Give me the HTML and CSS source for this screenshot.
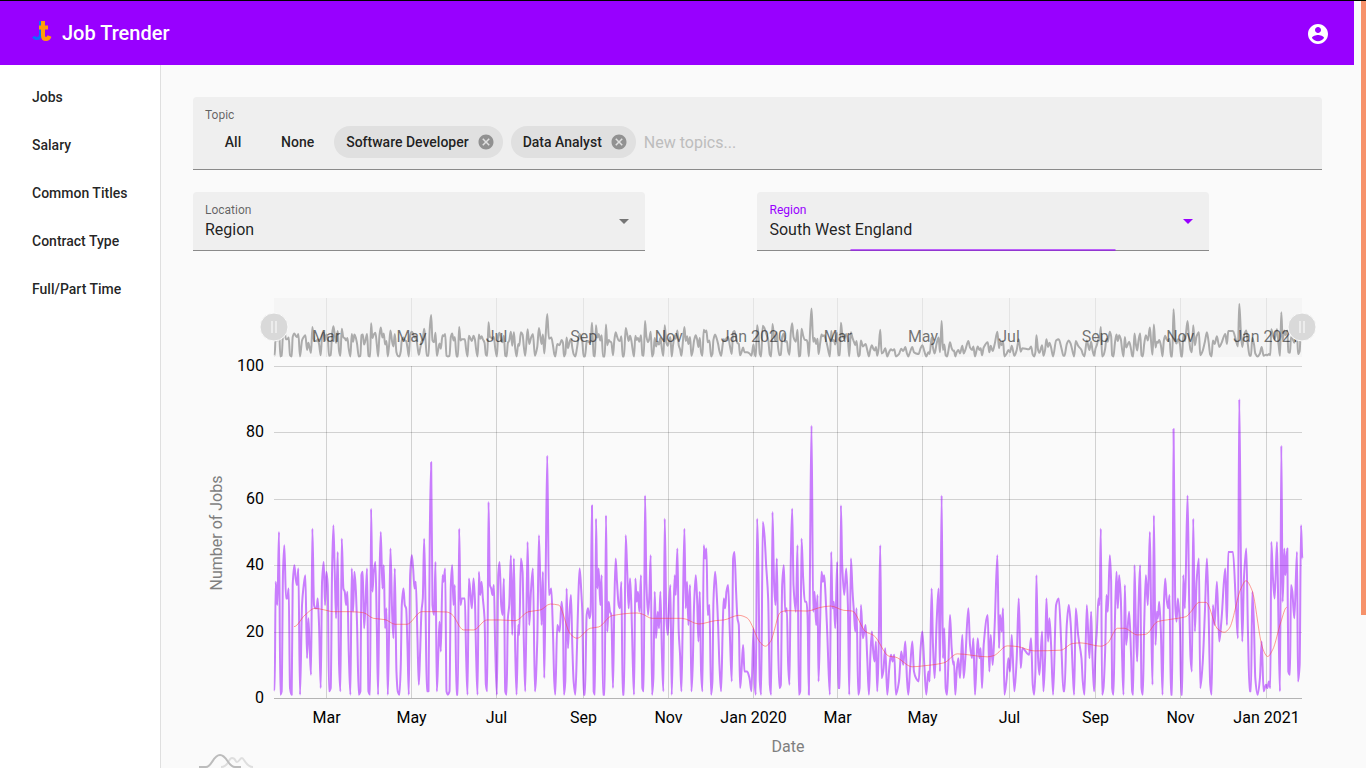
FILE: index.html
```html
<!DOCTYPE html>
<html lang="en">
<head>
  <meta charset="UTF-8">
  <meta name="viewport" content="width=device-width, initial-scale=1.0">
  <title>Job Trender</title>
  <link rel="stylesheet" href="styles.css">
</head>
<body>
  <div class="page">
    <header class="toolbar">
      <a class="brand" href="#">
        <svg class="logo" viewBox="0 0 20 24" aria-hidden="true">
          <path d="M8.500 0v13q0 4.500-3.500 4.500-2.500 0-3.500-2" fill="none" stroke="#0a6cff" stroke-width="3"/>
          <path d="M11 0v14.500q0 3.500 3 3.500 2.500 0 3.500-3M7 6.500h9" fill="none" stroke="#ff9c0a" stroke-width="4"/>
        </svg>
        <span>Job Trender</span>
      </a>
      <button class="account" aria-label="Account">
        <svg viewBox="0 0 24 24"><path fill="currentColor" d="M12 2C6.480 2 2 6.480 2 12s4.480 10 10 10 10-4.480 10-10S17.520 2 12 2zm0 3c1.660 0 3 1.340 3 3s-1.340 3-3 3-3-1.340-3-3 1.340-3 3-3zm0 14.200c-2.500 0-4.710-1.280-6-3.220.030-1.990 4-3.080 6-3.080 1.990 0 5.970 1.090 6 3.080-1.290 1.940-3.500 3.220-6 3.220z"/></svg>
      </button>
    </header>

    <div class="layout">
      <nav class="sidenav">
        <a href="#jobs">Jobs</a>
        <a href="#salary">Salary</a>
        <a href="#titles">Common Titles</a>
        <a href="#contract">Contract Type</a>
        <a href="#time">Full/Part Time</a>
      </nav>

      <main class="content">
        <div class="field topics">
          <label for="topic">Topic</label>
          <div class="chips">
            <button class="text-button">All</button>
            <button class="text-button">None</button>
            <span class="chip">Software Developer
              <button class="remove" aria-label="Remove Software Developer"><svg viewBox="0 0 24 24"><path fill="currentColor" d="M12 2C6.470 2 2 6.470 2 12s4.470 10 10 10 10-4.470 10-10S17.530 2 12 2zm5 13.590L15.590 17 12 13.410 8.410 17 7 15.590 10.590 12 7 8.410 8.410 7 12 10.590 15.590 7 17 8.410 13.410 12 17 15.590z"/></svg></button>
            </span>
            <span class="chip">Data Analyst
              <button class="remove" aria-label="Remove Data Analyst"><svg viewBox="0 0 24 24"><path fill="currentColor" d="M12 2C6.470 2 2 6.470 2 12s4.470 10 10 10 10-4.470 10-10S17.530 2 12 2zm5 13.590L15.590 17 12 13.410 8.410 17 7 15.590 10.590 12 7 8.410 8.410 7 12 10.590 15.590 7 17 8.410 13.410 12 17 15.590z"/></svg></button>
            </span>
            <input id="topic" type="text" placeholder="New topics...">
          </div>
        </div>

        <div class="filters">
          <div class="field">
            <label for="location">Location</label>
            <select id="location">
              <option>Region</option>
            </select>
          </div>
          <div class="field active">
            <label for="region">Region</label>
            <select id="region">
              <option>South West England</option>
            </select>
          </div>
        </div>

        <svg class="chart" id="chart" role="img" aria-label="Number of jobs by date"></svg>
      </main>
    </div>
  </div>
  <div class="scroll-thumb"></div>

  <script src="chart.js"></script>
</body>
</html>
```
FILE: styles.css
```css
* {
  box-sizing: border-box;
}
body {
  margin: 0;
  height: 100vh;
  overflow: hidden;
  background: #fafafa;
  color: rgba(0, 0, 0, 0.87);
  font-family: Roboto, "Liberation Sans", sans-serif;
  font-size: 14px;
  border-top: 1px solid #000;
}
button {
  border: none;
  background: none;
  padding: 0;
  color: inherit;
  font: inherit;
  cursor: pointer;
}
a {
  color: inherit;
  text-decoration: none;
}
.page {
  display: flex;
  flex-direction: column;
  height: 100%;
  margin-right: 12px;
}

/* Toolbar */
.toolbar {
  display: flex;
  flex: none;
  align-items: center;
  justify-content: space-between;
  height: 64px;
  padding: 0 24px 0 32px;
  background: #9800ff;
  color: #fff;
}
.brand {
  display: flex;
  align-items: center;
  gap: 10px;
  font-size: 20px;
  font-weight: 500;
}
.logo {
  width: 20px;
  height: 24px;
}
.account {
  padding-top: 2px;
}
.account svg {
  display: block;
  width: 24px;
  height: 24px;
}

.layout {
  display: flex;
  flex: 1;
  min-height: 0;
}
.sidenav {
  flex: none;
  width: 161px;
  padding-top: 8px;
  background: #fff;
  border-right: 1px solid #dfdfdf;
}
.sidenav a {
  display: block;
  padding: 0 32px;
  line-height: 48px;
  font-weight: 500;
}
.content {
  flex: 1;
  min-width: 0;
  padding: 32px;
  overflow: hidden;
}

/* Form fields */
.field {
  position: relative;
  padding: 10px 12px 0;
  background: #efefef;
  border-bottom: 1px solid #8a8a8a;
  border-radius: 4px 4px 0 0;
}
.field label {
  display: block;
  color: rgba(0, 0, 0, 0.6);
  font-size: 12px;
  line-height: 16px;
}
.topics {
  height: 73px;
}
.chips {
  display: flex;
  align-items: center;
  gap: 8px;
  margin: 3px 0 0 -4px;
}
.text-button {
  min-width: 64px;
  margin-right: -8px;
  padding: 0 16px;
  line-height: 32px;
  font-weight: 500;
}
.text-button + .chip {
  margin-left: 4px;
}
.chip {
  display: flex;
  align-items: center;
  gap: 8px;
  height: 32px;
  padding: 0 8px 0 12px;
  border-radius: 16px;
  background: #e0e0e0;
  font-weight: 500;
  white-space: nowrap;
}
.remove {
  opacity: 0.4;
}
.remove svg {
  display: block;
  width: 18px;
  height: 18px;
}
.chips input {
  flex: 1;
  min-width: 100px;
  padding: 0;
  border: none;
  outline: none;
  background: none;
  font: 16px Roboto, sans-serif;
}
.chips input::placeholder {
  color: #bdbdbd;
}
.filters {
  display: grid;
  grid-template-columns: 40% 40%;
  column-gap: 10%;
  margin-top: 22px;
}
.filters .field {
  height: 59px;
}
.field select {
  appearance: none;
  display: block;
  width: 100%;
  height: 22px;
  padding: 0;
  border: none;
  outline: none;
  background: none;
  color: inherit;
  font: 16px Roboto, sans-serif;
}
.filters .field::before {
  content: "";
  position: absolute;
  top: 27px;
  right: 16px;
  border: 5px solid transparent;
  border-top-color: #757575;
  border-bottom: none;
}
.filters .active::before {
  border-top-color: #9800ff;
}
.filters .active label {
  color: #9800ff;
}
.active::after {
  content: "";
  position: absolute;
  left: 50%;
  bottom: -1px;
  width: 265px;
  height: 2px;
  background: #9800ff;
  opacity: 0.6;
  transform: translateX(-50%);
}

/* Chart */
.chart {
  display: block;
  width: 100%;
  height: 500px;
  margin-top: 30px;
  font-size: 16px;
}
.chart .axis-title {
  fill: #7f7f7f;
}
.chart .grid {
  stroke: #000;
  stroke-opacity: 0.16;
}
.chart .preview-grid {
  stroke: #e4e4e4;
}
.chart .base {
  stroke: #b4b4b4;
}
.chart .jobs {
  fill: none;
  stroke: #9800ff;
  stroke-opacity: 0.5;
  stroke-width: 2;
  stroke-linejoin: round;
}
.chart .trend {
  fill: none;
  stroke: #ff3b30;
  stroke-opacity: 0.5;
}
.chart .preview {
  fill: none;
  stroke: #ababab;
  stroke-width: 2;
  stroke-linejoin: round;
}
.chart .preview-label {
  fill: #000;
  fill-opacity: 0.55;
}

.scroll-thumb {
  position: fixed;
  top: 1px;
  right: 0;
  width: 5px;
  height: 80%;
  background: #f6926a;
}
```
FILE: chart.js
```js
// Each block lists x, jobs, x, jobs ... with x counted from the block's start
const jobs = [
  { start: -252, data: [
    254,2,257,35,262,28,267,50,271,1,275,2,279,38,283,46,288,30,292,30,296,33,300,3,305,1,308,34,313,40,317,36,321,34,325,39,330,1,
    336,28,340,33,346,37,351,12,355,24,359,15,363,7,367,51,372,28,376,27,380,27,383,30,387,22,392,3,396,35,401,41,405,28,409,38,413,34,417,2,422,3,
    426,38,430,52,434,38,438,24,443,44,447,10,451,2,455,48,460,33,464,32,468,28,472,32,476,14,481,1,485,39,489,26,493,38,497,33,501,22,506,1,511,2,
    514,37,518,38,522,21,526,28,531,39,535,2,540,1,543,57,547,32,551,38,556,41,560,22,564,1,568,36,572,50,577,33,581,40,585,21,589,27,593,1,
    597,20,601,45,606,26,610,18,614,39,619,8,623,2,628,1,632,10,635,28,640,33,644,28,648,27,652,16,656,1,660,37,665,43,669,39,673,33,677,35,682,18,686,4,
    690,14,694,26,698,30,702,48,706,29,710,2,715,2,719,50,723,71,727,28,732,25,736,41,740,2,744,12,748,23,752,14,757,37,760,35,765,39,769,2,773,1,778,2,
    782,34,786,40,790,28,794,34,799,1,803,1,807,51,811,28,815,30,820,30,824,30,828,12,832,1,836,36,841,31,845,27,850,36,854,30,858,12,862,1,
    866,38,870,31,874,35,878,30,883,24,887,4,891,2,895,59,899,34,903,33,907,31,911,34,915,15,920,1,924,37,928,41,933,28,937,25,941,36,945,2,949,1,
    953,24,957,28,962,43,966,19,971,42,975,14,979,1,984,22,987,19,992,42,997,38,1001,16,1005,2,1012,47,1017,22,1022,32,1028,39,1034,2,1041,17,1046,49
  ] },
  { start: 768, data: [
    34,22,38,38,42,6,46,35,51,73,56,31,63,33,68,20,72,5,75,1,81,22,88,20,94,29,98,24,101,1,105,5,109,33,113,15,118,26,122,31,126,16,130,5,135,1,
    140,15,144,30,148,39,153,32,156,26,160,1,164,1,169,25,173,27,178,24,181,26,185,58,190,2,194,1,197,54,201,33,205,39,210,28,214,37,218,1,223,1,
    227,55,231,20,235,29,239,26,243,25,248,3,252,28,256,42,260,35,265,28,269,27,273,35,277,1,281,1,286,49,290,40,295,27,299,36,303,28,307,12,311,1,
    315,36,319,29,323,32,327,26,332,37,336,3,340,2,344,61,348,35,353,25,357,31,361,43,365,1,369,6,373,32,377,18,382,26,386,21,390,32,395,12,399,2,
    403,54,408,24,412,19,416,28,420,34,424,1,428,20,433,37,436,31,441,45,445,20,449,13,453,2,457,23,462,51,466,27,470,35,474,22,479,34,483,2,487,10,
    491,28,496,37,500,30,504,17,508,32,512,8,516,2,520,46,524,42,528,45,532,25,537,28,542,1,546,5,549,29,554,38,559,31,563,22,567,10,572,2,
    577,22,580,30,584,27,588,32,593,34,598,20,604,5,608,42,612,44,617,32,621,24,625,22,629,3,633,8,638,16,642,8,650,8,657,6,663,2,669,21,673,4,676,1,
    680,54,684,38,688,5,692,1,697,53,702,49,707,40,713,30,718,4,722,1,726,56,731,34,735,28,739,42,743,15,747,3,751,4,755,34,760,40,764,26,769,27,773,10,777,4,
    781,42,785,57,789,34,796,26,801,46,805,1,809,2,813,48
  ] },
  { start: 1578, data: [
    8,36,13,29,18,29,21,25,25,1,29,48,33,82,38,26,42,32,47,22,51,31,54,5,59,24,63,38,67,35,71,37,75,31,80,20,88,1,92,44,96,27,100,29,104,21,110,41,113,3,118,3,
    121,58,125,40,131,31,137,39,142,28,146,1,151,42,156,32,160,26,164,20,168,27,173,1,177,3,181,28,187,18,195,22,200,12,205,1,209,12,214,20,218,14,222,11,226,17,230,2,
    234,14,239,46,243,6,248,8,254,15,260,1,266,9,271,13,276,11,281,13,286,1,295,5,302,14,308,10,314,17,319,6,323,1,328,8,335,17,340,8,346,6,354,5,360,15,365,20,371,10,377,1,
    383,8,387,5,393,33,397,16,402,6,408,23,414,33,418,8,423,61,427,12,431,21,435,3,439,1,443,10,448,25,453,15,458,10,460,11,464,1,468,8,473,12,478,6,485,19,489,6,494,12,503,27,
    508,16,514,12,518,18,523,1,531,18,536,12,540,15,544,3,549,16,561,25,566,8,570,19,576,10,582,22,590,43,595,15,598,25,603,20,607,27,611,1,618,6,623,12,628,8,633,19,641,2,
    648,12,654,30,660,9,665,15,685,13,691,18,696,4,700,1,704,8,707,37,712,12,716,7,724,20,728,2,733,12,737,30,742,17,746,24,751,16,757,1,766,28,774,30,782,15,788,2,791,2,
    798,22,804,28,810,22,816,8,820,1
  ] },
  { start: 2388, data: [
    15,27,22,19,32,12,36,5,41,1,48,28,56,12,61,26,65,12,70,2,74,14,78,20,83,30,86,28,90,51,94,1,98,3,103,14,107,31,111,26,117,43,121,35,124,3,128,1,132,22,137,38,141,27,145,37,
    150,30,154,12,158,1,162,34,166,16,175,26,181,12,184,2,187,1,191,40,195,22,199,11,203,28,208,40,212,3,216,1,220,22,225,37,231,28,237,50,241,24,245,4,249,55,254,16,258,26,261,24,
    265,29,270,20,275,1,279,28,283,36,287,30,292,27,296,31,300,1,304,1,308,81,313,28,317,23,321,30,327,22,331,1,334,1,337,37,342,27,350,61,355,28,359,12,363,8,367,54,372,20,377,35,
    384,42,388,3,395,10,402,26,408,42,413,26,418,4,422,1,426,28,431,22,438,35,445,17,452,24,463,39,468,22,472,44,486,44,495,28,501,18,505,90,510,40,514,17,519,36,526,45,531,20,
    536,2,540,2,544,32,549,22,553,6,560,1,567,6,572,17,578,2,585,4,589,3,594,5,598,3,601,47,606,36,611,30,618,47,623,20,627,2,631,76,635,29,640,45,643,37,649,45,652,8,657,7,
    660,34,664,32,670,24,678,44,681,5,686,10,690,52,694,42
  ] }
];

const trend = [
  { start: -252, data: [312,21.5,345,25,375,27,400,26.6,430,26,480,26,520,25.7,550,24,585,23.6,615,22.2,650,22.2,695,26,740,26,770,25.9,785,25.2,820,20.5,850,20.5,890,23.5,930,23.5,975,23.3,1015,26] },
  { start: 768, data: [30,26.5,60,28.3,85,28,120,19.3,140,18,180,21,205,21.4,245,24.8,320,25.6,335,25.3,365,24,410,24,455,24,505,22.3,555,23.3,580,23.5,625,24.9,650,24.1,690,16.6,705,15.6,720,17,750,25.8,770,26.3] },
  { start: 1578, data: [20,26.2,60,27.3,90,27.7,130,26.4,155,26.2,195,20,220,18.8,265,12.6,285,12.3,335,9.4,370,9.7,430,10.6,470,13.3,560,12.4,580,12.8,620,15.7,650,15.5,700,14.2,780,14.4,815,16.4] },
  { start: 2388, data: [30,16.6,90,15.6,110,16.5,140,21,160,21,200,19,225,19.2,260,23,300,23.7,345,24.5,360,26,385,28.8,405,28.8,440,20.8,460,19.8,475,21,510,33,525,35.3,543,32.5,575,15,590,12.5,605,14.5,630,23,647,27.3] }
];

const months = [
  ['Mar', 157], ['May', 412], ['Jul', 667], ['Sep', 928], ['Nov', 1183], ['Jan 2020', 1438],
  ['Mar', 1690], ['May', 1945], ['Jul', 2203], ['Sep', 2461], ['Nov', 2716], ['Jan 2021', 2974]
];

const svg = document.getElementById('chart');
const left = 81;
const total = 3081;
const plotTop = 85;
const plotHeight = 332;
const previewTop = 17;
const previewHeight = 59;

function flatten(blocks) {
  const points = [];
  blocks.forEach(block => {
    for (let i = 0; i < block.data.length; i += 2) {
      points.push([block.start + block.data[i], block.data[i + 1]]);
    }
  });
  return points;
}

// Smooth line that stays flat at each peak and dip, so it never overshoots
function curve(points) {
  const slopes = points.map((p, i) => {
    const a = points[i - 1];
    const c = points[i + 1];
    if (!a || !c) return 0;
    const before = (p[1] - a[1]) / (p[0] - a[0]);
    const after = (c[1] - p[1]) / (c[0] - p[0]);
    return before * after <= 0 ? 0 : 2 * before * after / (before + after);
  });
  let d = 'M' + points[0].join(' ');
  for (let i = 1; i < points.length; i++) {
    const a = points[i - 1];
    const b = points[i];
    const dx = (b[0] - a[0]) / 3;
    d += `C${a[0] + dx} ${a[1] + slopes[i - 1] * dx} ${b[0] - dx} ${b[1] - slopes[i] * dx} ${b[0]} ${b[1]}`;
  }
  return d;
}

function grip(x) {
  const y = previewTop + 29;
  return `<circle cx="${x}" cy="${y}" r="14" fill="#d9d9d9" stroke="#fafafa"/>
    <path d="M${x - 2} ${y - 6}v12M${x + 2} ${y - 6}v12" stroke="#fff"/>`;
}

function draw() {
  const right = svg.clientWidth - 20;
  const width = right - left;
  const bottom = plotTop + plotHeight;
  const previewBottom = previewTop + previewHeight;
  const x = v => left + v / total * width;
  const main = p => [x(p[0]), bottom - p[1] * plotHeight / 100];
  const small = p => [x(p[0]), previewBottom - p[1] * previewHeight / 100];
  const points = flatten(jobs);
  let out = `<rect x="${left}" y="${previewTop}" width="${width}" height="${previewHeight}" fill="#f5f5f5"/>`;

  months.forEach(([name, at]) => {
    const mx = Math.floor(x(at)) + 0.5;
    out += `<path class="preview-grid" d="M${mx} ${previewTop}V${previewBottom}"/>
      <path class="grid" d="M${mx} ${plotTop}V${bottom}"/>
      <text x="${mx}" y="${bottom + 25}" text-anchor="middle">${name}</text>`;
  });
  for (let v = 0; v <= 100; v += 20) {
    const y = Math.round(bottom - v * plotHeight / 100) + 0.5;
    out += `<path class="${v ? 'grid' : 'base'}" d="M${left} ${y}H${right}"/>
      <text x="${left - 10}" y="${y + 4}" text-anchor="end">${v}</text>`;
  }

  out += `<path class="preview" d="${curve(points.map(small))}"/>`;
  months.forEach(([name, at]) => {
    out += `<text class="preview-label" x="${x(at)}" y="${previewBottom - 15}" text-anchor="middle">${name}</text>`;
  });
  out += grip(left) + grip(right);

  out += `<path class="jobs" d="${curve(points.map(main))}"/>
    <path class="trend" d="${curve(flatten(trend).map(main))}"/>
    <text class="axis-title" x="${left + width / 2}" y="${bottom + 54}" text-anchor="middle">Date</text>
    <text class="axis-title" transform="translate(29 ${plotTop + plotHeight / 2 + 1}) rotate(-90)" text-anchor="middle">Number of Jobs</text>
    <path d="M28 486C36 486 35 477 39 477S42 481 44 481 47 477 49 477 53 486 60 486" fill="none" stroke="#dedede" stroke-width="2"/>
    <path d="M6 486H13C19 486 20 474 27 474S35 486 42 486H48" fill="none" stroke="#bcbcbc" stroke-width="2"/>`;
  svg.innerHTML = out;
}

draw();
window.addEventListener('resize', draw);
```
